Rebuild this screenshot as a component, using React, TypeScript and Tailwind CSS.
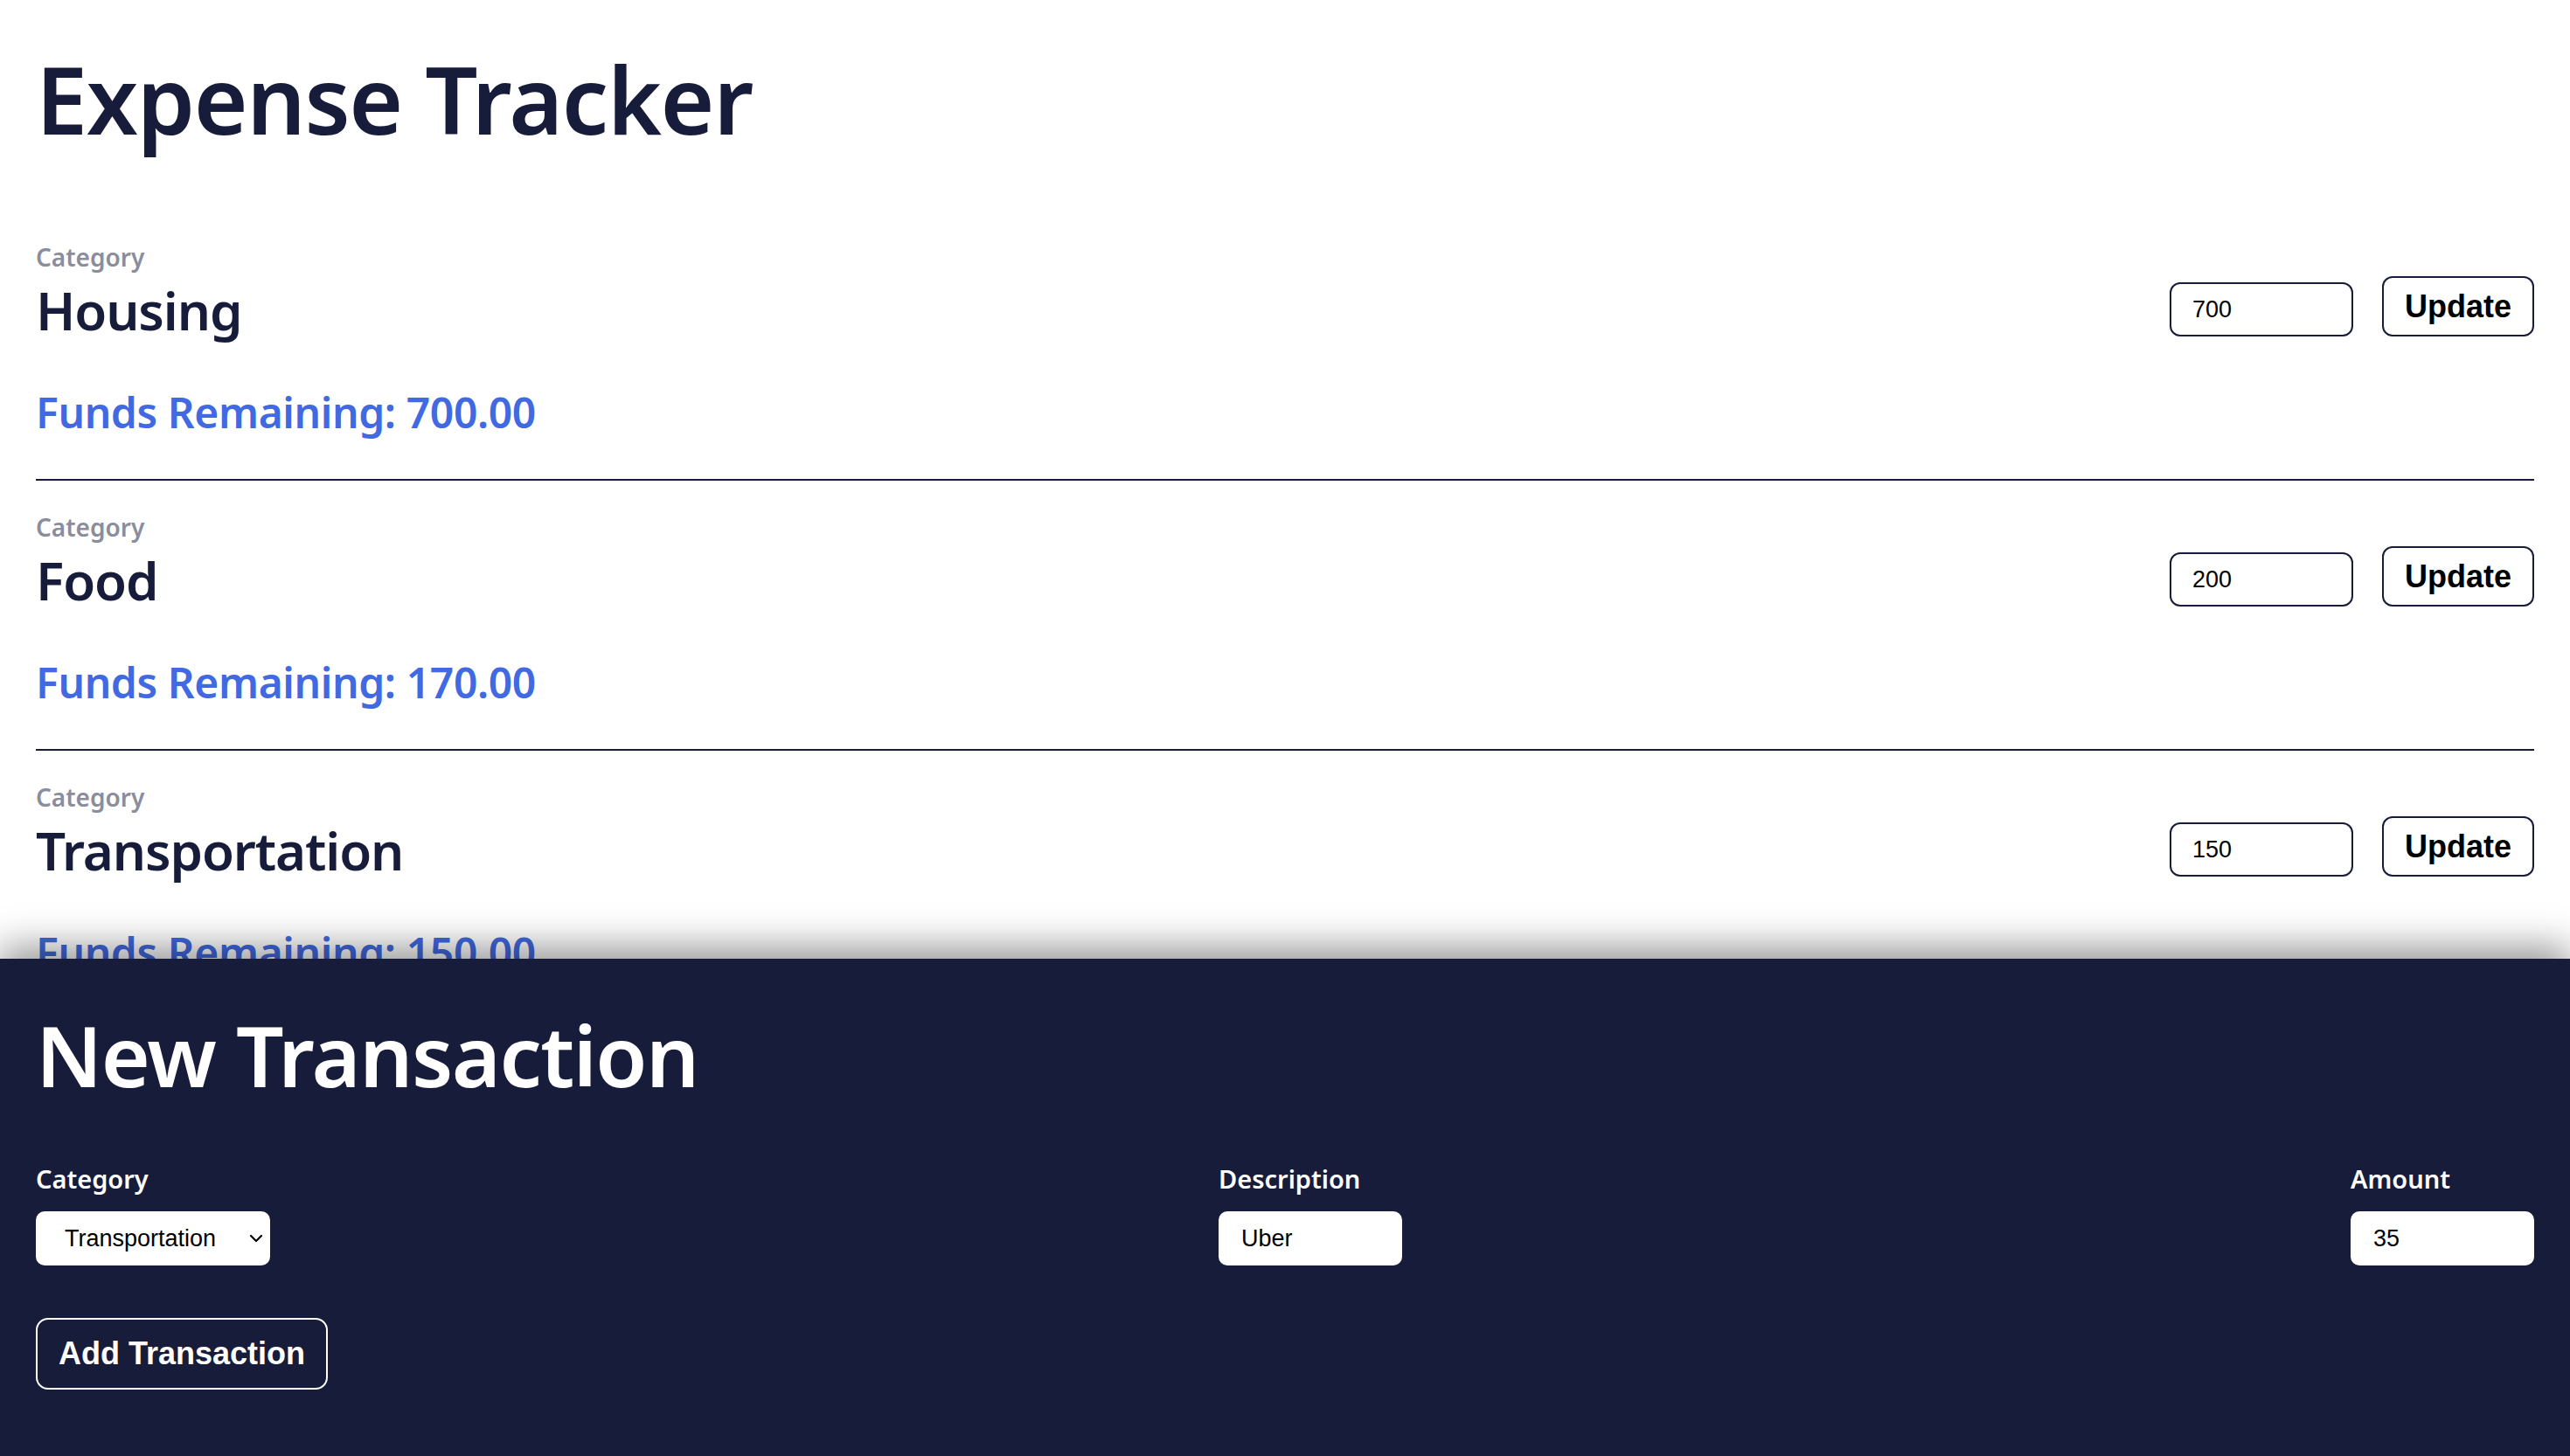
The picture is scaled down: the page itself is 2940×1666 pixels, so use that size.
import { useState } from "react";

type Category = {
  name: string;
  budget: number;
  spent: number;
};

const initialCategories: Category[] = [
  { name: "Housing", budget: 700, spent: 0 },
  { name: "Food", budget: 200, spent: 30 },
  { name: "Transportation", budget: 150, spent: 0 },
];

function CategoryRow({ category }: { category: Category }) {
  const [value, setValue] = useState(String(category.budget));

  return (
    <section>
      <p className="text-[28px] leading-[34px] font-semibold text-[#8a8d9d]">Category</p>
      <div className="mt-[5px] flex items-center justify-between">
        <h2 className="text-[60px] leading-[72px] font-semibold tracking-[-1.1px] text-[#171c3b]">
          {category.name}
        </h2>
        <div className="mb-[8px] flex items-end gap-[33px] font-['Liberation_Sans',Arial,sans-serif]">
          <input
            value={value}
            onChange={(e) => setValue(e.target.value)}
            className="h-[62px] w-[210px] rounded-[12px] border-2 border-[#171c3b] bg-white px-[24px] text-[27px] leading-[30px] text-black outline-none"
          />
          <button className="h-[69px] rounded-[12px] border-2 border-[#171c3b] bg-white px-[24px] text-[36px] leading-[42px] font-bold text-black">
            Update
          </button>
        </div>
      </div>
      <p className="mt-[50px] text-[48px] leading-[58px] font-semibold tracking-[-0.4px] text-[#4169e1]">
        Funds Remaining: {(category.budget - category.spent).toFixed(2)}
      </p>
      <hr className="mt-[47px] mb-[36px] border-0 border-t-2 border-[#171c3b]" />
    </section>
  );
}

function NewTransaction() {
  const [category, setCategory] = useState("Transportation");
  const [description, setDescription] = useState("Uber");
  const [amount, setAmount] = useState("35");

  return (
    <div className="relative z-10 h-[569px] shrink-0 bg-[#171c3b] px-[41px] pt-[52px] shadow-[0_-14px_40px_rgba(0,0,0,0.4)]">
      <h2 className="text-[96px] leading-[115px] font-semibold tracking-[-1.5px] text-white">
        New Transaction
      </h2>
      <div className="mt-[67px] flex justify-between">
        <label className="flex flex-col">
          <span className="text-[29px] leading-[36px] font-semibold text-white">Category</span>
          <div className="relative mt-[19px]">
            <select
              value={category}
              onChange={(e) => setCategory(e.target.value)}
              className="h-[62px] w-[268px] appearance-none rounded-[10px] bg-white pl-[33px] pr-[40px] font-['Liberation_Sans',Arial,sans-serif] text-[27px] text-black outline-none"
            >
              <option>Housing</option>
              <option>Food</option>
              <option>Transportation</option>
            </select>
            <svg
              className="pointer-events-none absolute right-[8px] top-[24px] h-[14px] w-[16px]"
              viewBox="0 0 16 14"
              fill="none"
              stroke="black"
              strokeWidth="2.2"
              strokeLinecap="round"
              strokeLinejoin="round"
            >
              <path d="M2 4l6 6 6-6" />
            </svg>
          </div>
        </label>
        <label className="flex flex-col">
          <span className="text-[29px] leading-[36px] font-semibold text-white">Description</span>
          <input
            value={description}
            onChange={(e) => setDescription(e.target.value)}
            className="mt-[19px] h-[62px] w-[210px] rounded-[10px] bg-white px-[26px] font-['Liberation_Sans',Arial,sans-serif] text-[27px] text-black outline-none"
          />
        </label>
        <label className="flex flex-col">
          <span className="text-[29px] leading-[36px] font-semibold text-white">Amount</span>
          <input
            value={amount}
            onChange={(e) => setAmount(e.target.value)}
            className="mt-[19px] h-[62px] w-[210px] rounded-[10px] bg-white px-[26px] font-['Liberation_Sans',Arial,sans-serif] text-[27px] text-black outline-none"
          />
        </label>
      </div>
      <button className="mt-[60px] rounded-[14px] border-2 border-white px-[24px] py-[18px] font-['Liberation_Sans',Arial,sans-serif] text-[36px] leading-[42px] font-bold text-white">
        Add Transaction
      </button>
    </div>
  );
}

export default function App() {
  const [categories] = useState(initialCategories);

  return (
    <div className="flex h-screen flex-col overflow-hidden bg-white font-['Noto_Sans',sans-serif]">
      <main className="min-h-0 flex-1 overflow-hidden px-[41px] pt-[50px]">
        <h1 className="text-[106px] leading-[127px] font-semibold tracking-[-1.4px] text-[#171c3b]">
          Expense Tracker
        </h1>
        <div className="mt-[100px]">
          {categories.map((c) => (
            <CategoryRow key={c.name} category={c} />
          ))}
        </div>
      </main>
      <NewTransaction />
    </div>
  );
}
